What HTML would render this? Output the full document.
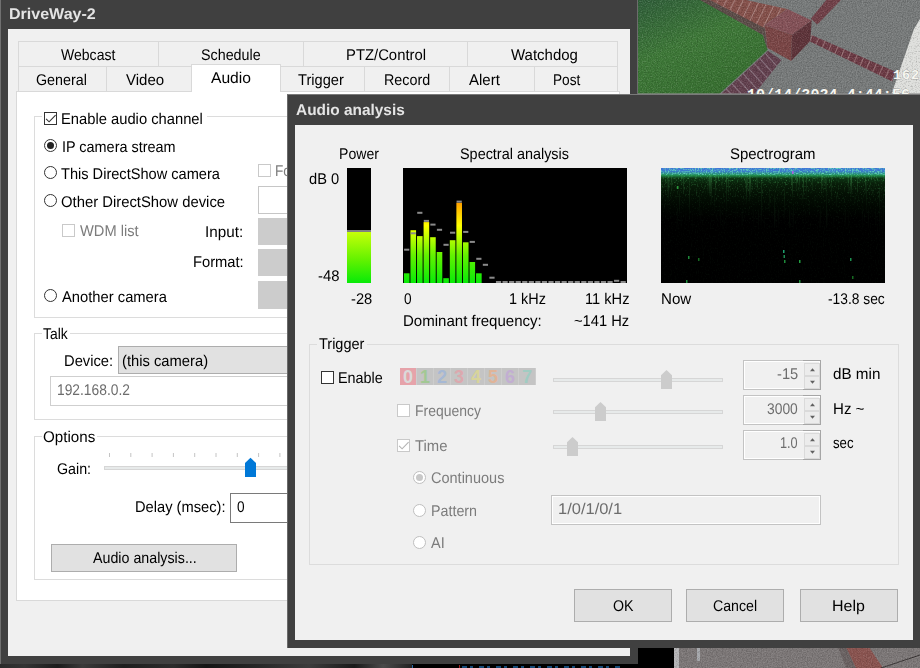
<!DOCTYPE html>
<html><head><meta charset="utf-8"><title>DriveWay-2 - Audio analysis</title>
<style>
html,body{margin:0;padding:0;background:#404040;}
#root{position:relative;width:920px;height:668px;overflow:hidden;background:#404040;font-family:"Liberation Sans",sans-serif;font-size:15.5px;color:#000;}
#root div,#root span,#root svg{position:absolute;box-sizing:border-box;}
.t{white-space:nowrap;line-height:21px;height:21px;transform-origin:0 0;text-rendering:geometricPrecision;}
.f0{background:#f0f0f0;}
.gb{border:1px solid #dcdcdc;}
.gap{background:#fff;height:1px;}
.tab{border-right:1px solid #d9d9d9;top:0;height:100%;}
.cb{width:13px;height:13px;border:1px solid #333;background:#fff;}
.cbd{width:13px;height:13px;border:1px solid #c9c9c9;background:#fff;}
.rd{width:13px;height:13px;border:1px solid #333;border-radius:50%;background:#fff;}
.rdd{width:13px;height:13px;border:1px solid #bfbfbf;border-radius:50%;background:#fff;}
.dis{background:#cccccc;}
.btn{background:#e1e1e1;border:1px solid #adadad;}
.spin{width:78px;height:30px;border:1px solid #c3c3c3;background:#f0f0f0;box-shadow:inset 1px 1px 0 #fff, inset -1px -1px 0 #fff;}
.spb{left:60px;width:16px;background:#ececec;border:1px solid #dadada;}
.trk{height:4px;background:#e7eaea;border:1px solid #d6d6d6;}
</style></head>
<body>
<div id="root">
<!-- camera view top-right -->
<svg style="left:638px;top:0;" width="282" height="94" viewBox="638 0 282 94">
  <defs>
    <linearGradient id="gr" x1="0" y1="0" x2="0.6" y2="1"><stop offset="0" stop-color="#305e3a"/><stop offset="0.5" stop-color="#3e7838"/><stop offset="1" stop-color="#376e30"/></linearGradient>
    <pattern id="bk1" width="7" height="7" patternUnits="userSpaceOnUse" patternTransform="rotate(24)"><rect width="7" height="7" fill="#6b3a44"/><rect width="1" height="7" fill="#9a7478"/></pattern>
    <pattern id="bk2" width="7.5" height="30" patternUnits="userSpaceOnUse" patternTransform="rotate(26)"><rect width="7.5" height="30" fill="#84504a"/><rect width="1" height="30" fill="#a8807c"/></pattern>
    <pattern id="bk3" width="7.5" height="30" patternUnits="userSpaceOnUse" patternTransform="rotate(-42)"><rect width="7.5" height="30" fill="#62404e"/><rect width="1" height="30" fill="#8a7480"/></pattern>
    <filter id="cn" x="0" y="0" width="100%" height="100%"><feTurbulence type="fractalNoise" baseFrequency="0.8" numOctaves="2" seed="2"/><feColorMatrix values="0 0 0 0 0  0 0 0 0 0  0 0 0 0 0  -1.6 0 0 0 0.8"/></filter>
    <filter id="cw" x="0" y="0" width="100%" height="100%"><feTurbulence type="fractalNoise" baseFrequency="0.8" numOctaves="2" seed="2"/><feColorMatrix values="0 0 0 0 1  0 0 0 0 1  0 0 0 0 1  1.6 0 0 0 -0.8"/></filter>
  </defs>
  <rect x="638" y="0" width="282" height="94" fill="#777a7a"/>
  <polygon points="638,0 702,0 763,35 767.6,50 719.2,94 638,94" fill="url(#gr)"/>
  <polygon points="700,0 709.8,0 764.6,27 767.6,50 763,35" fill="#5c4c48"/>
  <polygon points="709.8,0 746.3,0 787.4,9.1 764.6,25 764.6,28" fill="url(#bk2)"/>
  <polygon points="764.6,25 787.4,9.1 811.7,20.5 792,35" fill="#845258"/>
  <polygon points="764.6,25 792,35 791.2,61 767.6,48" fill="#7a4646"/>
  <polygon points="792,35 811.7,20.5 810.2,41 791.2,61" fill="#5e343a"/>
  <polygon points="811.6,35 895.5,71.7 892.3,81.5 810,41.6" fill="url(#bk1)"/>
  <polygon points="810.8,18.8 817.3,24.5 840.9,0 826.3,0" fill="#704048"/>
  <polygon points="768,51 781.5,60 754.5,94 721,94" fill="url(#bk3)"/>
  <polygon points="920,19 914,29 891.5,94 920,94" fill="#dedfdc"/>
  <rect x="638" y="0" width="282" height="94" filter="url(#cn)" opacity="0.32"/><rect x="638" y="0" width="282" height="94" filter="url(#cw)" opacity="0.26"/>
  <rect x="638" y="93" width="282" height="1" fill="#8d8d8d" opacity="0.6"/>
  <g font-family="'Liberation Mono',monospace" font-weight="bold" fill="#f6f6f0" stroke="#666" stroke-width="0.35" paint-order="stroke">
    <text x="893" y="78.5" font-size="13.5" textLength="26">162</text>
    <text x="747" y="98.5" font-size="15" textLength="163">10/14/2024 4:44:56</text>
  </g>
</svg>
<!-- camera views along the bottom -->
<div style="left:0;top:664px;width:412px;height:4px;background:linear-gradient(90deg,#2b2b2b 0,#343434 6%,#1c1c1c 14%,#3a3a3a 20%,#1e1e1e 30%,#2c2c2c 42%,#151515 50%,#262626 62%,#3c3c3c 75%,#1a1a1a 86%,#4a4a4a 93%,#222 100%);"></div>
<div style="left:412px;top:664px;width:226px;height:4px;background:#000;"></div>
<div style="left:412px;top:665px;width:1px;height:3px;background:#2a6aa8;"></div>
<div style="left:459px;top:665px;width:1px;height:3px;background:#a02020;"></div>
<div style="left:462px;top:666px;width:160px;height:2px;background:repeating-linear-gradient(90deg,#1e5e96 0 5px,#000 5px 8px,#1e5e96 8px 11px,#000 11px 17px);opacity:.8;"></div>
<div style="left:638px;top:647px;width:36px;height:21px;background:#000;"></div>
<svg style="left:674px;top:647px;" width="246" height="21" viewBox="674 647 246 21">
  <rect x="674" y="647" width="246" height="21" fill="#7c7777"/>
  <rect x="674" y="647" width="5" height="21" fill="#b4b4b6"/>
  <rect x="697" y="647" width="3" height="14" fill="#a6a8ac"/>
  <polygon points="838,647 846,647 856,668 846,668" fill="#6a6262"/>
  <polygon points="846,647 869,647 883,668 856,668" fill="#8a5450"/>
  <path d="M881 668 L920 655" stroke="#3c3838" stroke-width="1" fill="none"/>
  <rect x="674" y="647" width="246" height="21" filter="url(#cn)" opacity="0.3"/><rect x="674" y="647" width="246" height="21" filter="url(#cw)" opacity="0.24"/>
</svg>

<!-- ===== outer window ===== -->
<div style="left:0;top:0;width:638px;height:664px;background:#404040;"></div>
<div style="left:0;top:0;width:1px;height:664px;background:#707070;"></div>
<div style="left:637px;top:0;width:1px;height:94px;background:#6c6c6c;"></div>
<div class="f0" style="left:8px;top:29px;width:622px;height:627px;"></div>
<!-- tab pane -->
<div style="left:16px;top:91px;width:604px;height:510px;background:#fff;border:1px solid #d9d9d9;"></div>
<!-- tab row 1 -->
<div style="left:18px;top:41px;width:600px;height:26px;border-top:1px solid #d9d9d9;border-left:1px solid #d9d9d9;">
  <div class="tab" style="left:0;width:140px;"></div>
  <div class="tab" style="left:140px;width:145px;"></div>
  <div class="tab" style="left:285px;width:164px;"></div>
  <div class="tab" style="left:449px;width:150px;"></div>
</div>
<!-- tab row 2 -->
<div style="left:18px;top:66px;width:600px;height:25px;border-top:1px solid #d9d9d9;border-left:1px solid #d9d9d9;">
  <div class="tab" style="left:0;width:88px;"></div>
  <div class="tab" style="left:88px;width:85px;"></div>
  <div class="tab" style="left:262px;width:84px;"></div>
  <div class="tab" style="left:346px;width:85px;"></div>
  <div class="tab" style="left:431px;width:85px;"></div>
  <div class="tab" style="left:516px;width:83px;"></div>
</div>
<!-- selected tab -->
<div style="left:191px;top:64px;width:90px;height:28px;background:#fff;border:1px solid #d9d9d9;border-bottom:none;"></div>

<!-- group 1 -->
<div class="gb" style="left:34px;top:116px;width:570px;height:202px;"></div>
<div class="gap" style="left:42px;top:116px;width:165px;"></div>
<div class="cb" style="left:44px;top:112px;"></div>
<svg style="left:44px;top:112px;" width="13" height="13" viewBox="0 0 13 13"><path d="M2.1 6.9 L5.1 9.8 L11.6 3.2" fill="none" stroke="#333" stroke-width="1.15"/></svg>
<div class="rd" style="left:44px;top:139px;"></div>
<div style="left:47px;top:142px;width:7px;height:7px;border-radius:50%;background:#222;"></div>
<div class="rd" style="left:44px;top:166px;"></div>
<div class="rd" style="left:44px;top:194px;"></div>
<div class="rd" style="left:44px;top:289px;"></div>
<div class="cbd" style="left:258px;top:164px;"></div>
<div class="cbd" style="left:62px;top:224px;"></div>
<div style="left:258px;top:186px;width:200px;height:28px;background:#fff;border:1px solid #c6c6c6;"></div>
<div class="dis" style="left:258px;top:218px;width:200px;height:27px;"></div>
<div class="dis" style="left:258px;top:249px;width:200px;height:27px;"></div>
<div class="dis" style="left:258px;top:281px;width:200px;height:28px;"></div>

<!-- group 2: Talk -->
<div class="gb" style="left:34px;top:333px;width:570px;height:87px;"></div>
<div class="gap" style="left:42px;top:333px;width:28px;"></div>
<div class="btn" style="left:118px;top:346px;width:300px;height:28px;"></div>
<div style="left:50px;top:376px;width:400px;height:30px;background:#fff;border:1px solid #cfcfcf;"></div>

<!-- group 3: Options -->
<div class="gb" style="left:34px;top:436px;width:570px;height:144px;"></div>
<div class="gap" style="left:42px;top:436px;width:55px;"></div>
<svg style="left:100px;top:450px;" width="200" height="30" viewBox="0 0 200 30">
  <g stroke="#c4c4c4" stroke-width="1">
    <path d="M9.5 3v4M30.8 3v4M52.1 3v4M73.4 3v4M94.7 3v4M116 3v4M137.3 3v4M158.6 3v4M179.9 3v4"/>
  </g>
  <rect x="4.5" y="16.5" width="200" height="3" fill="#e7eaea" stroke="#d6d6d6"/>
  <path d="M145 13 L150.5 7.8 L156 13 L156 27 L145 27 Z" fill="#0078d7"/>
</svg>
<div style="left:230px;top:493px;width:200px;height:30px;background:#fff;border:1px solid #7a7a7a;"></div>
<div class="btn" style="left:51px;top:544px;width:186px;height:28px;"></div>
<span class="t" style="left:8.67px;top:4px;transform:scaleX(1.0347);color:#e4e4e4;font-weight:bold;">DriveWay-2</span>
<span class="t" style="left:61.20px;top:45px;transform:scaleX(0.9058);">Webcast</span>
<span class="t" style="left:201.26px;top:45px;transform:scaleX(0.9225);">Schedule</span>
<span class="t" style="left:346.00px;top:45px;transform:scaleX(0.9575);">PTZ/Control</span>
<span class="t" style="left:511.10px;top:45px;transform:scaleX(0.9670);">Watchdog</span>
<span class="t" style="left:36.26px;top:70px;transform:scaleX(0.9221);">General</span>
<span class="t" style="left:125.96px;top:70px;transform:scaleX(0.9701);">Video</span>
<span class="t" style="left:211.00px;top:68px;transform:scaleX(1.0077);">Audio</span>
<span class="t" style="left:297.96px;top:70px;transform:scaleX(0.9448);">Trigger</span>
<span class="t" style="left:383.75px;top:70px;transform:scaleX(0.9236);">Record</span>
<span class="t" style="left:469.10px;top:70px;transform:scaleX(0.9669);">Alert</span>
<span class="t" style="left:552.70px;top:70px;transform:scaleX(0.8807);">Post</span>
<span class="t" style="left:60.81px;top:109px;transform:scaleX(0.9513);">Enable audio channel</span>
<span class="t" style="left:61.60px;top:137px;transform:scaleX(0.9305);">IP camera stream</span>
<span class="t" style="left:61.26px;top:164px;transform:scaleX(0.9412);">This DirectShow camera</span>
<span class="t" style="left:61.18px;top:192px;transform:scaleX(0.9571);">Other DirectShow device</span>
<span class="t" style="left:80.20px;top:221px;transform:scaleX(0.9452);color:#7c7c7c;">WDM list</span>
<span class="t" style="left:205.22px;top:222px;transform:scaleX(0.9833);">Input:</span>
<span class="t" style="left:192.71px;top:252px;transform:scaleX(0.9498);">Format:</span>
<span class="t" style="left:61.60px;top:287px;transform:scaleX(0.9515);">Another camera</span>
<span class="t" style="left:274.55px;top:161px;transform:scaleX(0.8800);color:#7c7c7c;">Fo</span>
<span class="t" style="left:43.48px;top:324px;transform:scaleX(0.8954);">Talk</span>
<span class="t" style="left:64.01px;top:351px;transform:scaleX(0.9510);">Device:</span>
<span class="t" style="left:122.05px;top:351px;transform:scaleX(0.9514);">(this camera)</span>
<span class="t" style="left:57.39px;top:380px;transform:scaleX(0.8903);color:#6d6d6d;">192.168.0.2</span>
<span class="t" style="left:42.97px;top:427px;transform:scaleX(0.9780);">Options</span>
<span class="t" style="left:57.31px;top:459px;transform:scaleX(0.9200);">Gain:</span>
<span class="t" style="left:135.02px;top:497px;transform:scaleX(0.9462);">Delay (msec):</span>
<span class="t" style="left:236.51px;top:497px;transform:scaleX(0.8800);">0</span>
<span class="t" style="left:93.30px;top:548px;transform:scaleX(0.9193);">Audio analysis...</span>

<!-- ===== Audio analysis dialog ===== -->
<div style="left:287px;top:94px;width:640px;height:554px;background:#404040;border-top:1px solid #7a7a7a;border-left:1px solid #6a6a6a;"></div>
<div class="f0" style="left:295px;top:125px;width:618px;height:515px;"></div>
<div style="left:347px;top:168px;width:24px;height:115px;background:#000;"></div>
<div style="left:347px;top:232px;width:24px;height:51px;background:linear-gradient(to top,#08ea08 0%,#62f200 45%,#c6ff08 100%);"></div>
<div style="left:347px;top:230px;width:24px;height:2px;background:#808080;"></div>
<svg style="left:403px;top:168px;" width="224" height="115" viewBox="403 168 224 115"><defs><linearGradient id="sg" gradientUnits="userSpaceOnUse" x1="0" y1="283" x2="0" y2="168"><stop offset="0" stop-color="#08ea08"/><stop offset="0.24" stop-color="#62f200"/><stop offset="0.40" stop-color="#c0ff00"/><stop offset="0.50" stop-color="#ffff00"/><stop offset="0.62" stop-color="#ffc800"/><stop offset="0.72" stop-color="#ff9400"/><stop offset="1" stop-color="#ff0000"/></linearGradient></defs><rect x="403" y="168" width="224" height="115" fill="#000"/><rect x="403.90" y="273.3" width="5.6" height="9.7" fill="url(#sg)"/><rect x="410.46" y="230.2" width="5.6" height="52.8" fill="url(#sg)"/><rect x="417.02" y="236.1" width="5.6" height="46.9" fill="url(#sg)"/><rect x="423.58" y="222.1" width="5.6" height="60.9" fill="url(#sg)"/><rect x="430.14" y="237.2" width="5.6" height="45.8" fill="url(#sg)"/><rect x="436.70" y="252.0" width="5.6" height="31.0" fill="url(#sg)"/><rect x="443.26" y="278.2" width="5.6" height="4.8" fill="url(#sg)"/><rect x="449.82" y="240.2" width="5.6" height="42.8" fill="url(#sg)"/><rect x="456.38" y="202.7" width="5.6" height="80.3" fill="url(#sg)"/><rect x="462.94" y="242.3" width="5.6" height="40.7" fill="url(#sg)"/><rect x="469.50" y="262.0" width="5.6" height="21.0" fill="url(#sg)"/><rect x="476.06" y="273.3" width="5.6" height="9.7" fill="url(#sg)"/><rect x="404.10" y="248.7" width="5.2" height="2" fill="#8a8a8a"/><rect x="410.66" y="232.3" width="5.2" height="2" fill="#8a8a8a"/><rect x="417.22" y="211.8" width="5.2" height="2" fill="#8a8a8a"/><rect x="423.78" y="219.9" width="5.2" height="2" fill="#8a8a8a"/><rect x="430.34" y="223.6" width="5.2" height="2" fill="#8a8a8a"/><rect x="436.90" y="228.8" width="5.2" height="2" fill="#8a8a8a"/><rect x="443.46" y="243.8" width="5.2" height="2" fill="#8a8a8a"/><rect x="450.02" y="231.7" width="5.2" height="2" fill="#8a8a8a"/><rect x="456.58" y="200.6" width="5.2" height="2" fill="#8a8a8a"/><rect x="463.14" y="230.9" width="5.2" height="2" fill="#8a8a8a"/><rect x="469.70" y="240.9" width="5.2" height="2" fill="#8a8a8a"/><rect x="476.26" y="257.8" width="5.2" height="2" fill="#8a8a8a"/><rect x="482.82" y="263.8" width="5.2" height="2" fill="#8a8a8a"/><rect x="489.38" y="276.7" width="5.2" height="2" fill="#8a8a8a"/><rect x="495.94" y="281.0" width="5.2" height="2" fill="#8a8a8a"/><rect x="502.50" y="281.0" width="5.2" height="2" fill="#8a8a8a"/><rect x="509.06" y="281.0" width="5.2" height="2" fill="#8a8a8a"/><rect x="515.62" y="281.0" width="5.2" height="2" fill="#8a8a8a"/><rect x="522.18" y="281.0" width="5.2" height="2" fill="#8a8a8a"/><rect x="528.74" y="281.0" width="5.2" height="2" fill="#8a8a8a"/><rect x="535.30" y="281.0" width="5.2" height="2" fill="#8a8a8a"/><rect x="541.86" y="281.0" width="5.2" height="2" fill="#8a8a8a"/><rect x="548.42" y="281.0" width="5.2" height="2" fill="#8a8a8a"/><rect x="554.98" y="281.0" width="5.2" height="2" fill="#8a8a8a"/><rect x="561.54" y="281.0" width="5.2" height="2" fill="#8a8a8a"/><rect x="568.10" y="281.0" width="5.2" height="2" fill="#8a8a8a"/><rect x="574.66" y="281.0" width="5.2" height="2" fill="#8a8a8a"/><rect x="581.22" y="281.0" width="5.2" height="2" fill="#8a8a8a"/><rect x="587.78" y="281.0" width="5.2" height="2" fill="#8a8a8a"/><rect x="594.34" y="281.0" width="5.2" height="2" fill="#8a8a8a"/><rect x="600.90" y="281.0" width="5.2" height="2" fill="#8a8a8a"/><rect x="607.46" y="281.0" width="5.2" height="2" fill="#8a8a8a"/><rect x="614.02" y="279.8" width="5.2" height="2" fill="#8a8a8a"/><rect x="620.58" y="281.0" width="5.2" height="2" fill="#8a8a8a"/></svg>
<svg style="left:661px;top:168px;" width="224" height="115" viewBox="0 0 224 115"><defs><linearGradient id="sp" x1="0" y1="0" x2="0" y2="1"><stop offset="0" stop-color="#4274da"/><stop offset="0.028" stop-color="#3a7ccc"/><stop offset="0.05" stop-color="#2a9080"/><stop offset="0.065" stop-color="#1f8a4c"/><stop offset="0.09" stop-color="#0d3313"/><stop offset="0.14" stop-color="#081d09"/><stop offset="0.22" stop-color="#041004"/><stop offset="0.34" stop-color="#010601"/><stop offset="0.45" stop-color="#000"/><stop offset="1" stop-color="#000"/></linearGradient><linearGradient id="mkg" x1="0" y1="0" x2="0" y2="1"><stop offset="0.04" stop-color="#000"/><stop offset="0.07" stop-color="#8c8c8c"/><stop offset="0.16" stop-color="#484848"/><stop offset="0.3" stop-color="#1c1c1c"/><stop offset="0.5" stop-color="#0c0c0c"/><stop offset="1" stop-color="#0a0a0a"/></linearGradient><mask id="mk"><rect width="224" height="115" fill="url(#mkg)"/></mask><filter id="nz" x="0" y="0" width="100%" height="100%"><feTurbulence type="fractalNoise" baseFrequency="0.85 0.5" numOctaves="2" seed="5"/><feColorMatrix values="0 0 0 0 0.10  0 0 0 0 0.60  0 0 0 0 0.16  0 3.2 0 0 -1.7"/></filter><filter id="nz2" x="0" y="0" width="100%" height="100%"><feTurbulence type="fractalNoise" baseFrequency="0.6 0.03" numOctaves="1" seed="11"/><feColorMatrix values="0 0 0 0 0.08  0 0 0 0 0.45  0 0 0 0 0.12  0 4 0 0 -2.3"/></filter><filter id="nz3" x="0" y="0" width="100%" height="100%"><feTurbulence type="fractalNoise" baseFrequency="0.7 0.6" numOctaves="2" seed="9"/><feColorMatrix values="0 0 0 0 0.12  0 0 0 0 0.62  0 0 0 0 0.50  0 3.4 0 0 -1.5"/></filter></defs><rect width="224" height="115" fill="url(#sp)"/><rect width="224" height="6.5" filter="url(#nz3)"/><g mask="url(#mk)"><rect width="224" height="115" filter="url(#nz)"/><rect width="224" height="60" filter="url(#nz2)"/></g><rect x="27" y="88" width="1.5" height="3" fill="#1e8a3a"/><rect x="37" y="90" width="1.5" height="3" fill="#156a20"/><rect x="122" y="82" width="1.5" height="3" fill="#1fa070"/><rect x="122.5" y="87" width="1.5" height="3" fill="#1c8a50"/><rect x="123" y="92" width="1.5" height="3" fill="#1e8a3a"/><rect x="138" y="92" width="1.5" height="3" fill="#22a040"/><rect x="189" y="90" width="1.5" height="3" fill="#1e9050"/><rect x="16" y="18" width="1.5" height="3" fill="#2a9a3a"/><rect x="131" y="3" width="1.5" height="3" fill="#b060e0"/><rect x="25" y="112" width="1.5" height="3" fill="#1e8a3a"/><rect x="138" y="112" width="1.5" height="3" fill="#1e8a3a"/><rect x="191" y="108" width="1.5" height="3" fill="#156a20"/></svg>
<div class="gb" style="left:309px;top:344px;width:590px;height:221px;"></div>
<div class="gap" style="left:317px;top:344px;width:50px;background:#f0f0f0;"></div>
<div class="cb" style="left:321px;top:371px;"></div>
<div style="left:400px;top:368px;width:17px;height:17px;background:#e6a3aa;border-right:1px solid #cdcdcd;"><span style="left:0;top:1px;width:16px;height:17px;line-height:17px;text-align:center;font-weight:bold;font-size:18px;color:#dadada;">0</span></div>
<div style="left:417px;top:368px;width:17px;height:17px;background:#c4c4c4;border-right:1px solid #cdcdcd;"><span style="left:0;top:1px;width:16px;height:17px;line-height:17px;text-align:center;font-weight:bold;font-size:18px;color:#a2c894;">1</span></div>
<div style="left:434px;top:368px;width:17px;height:17px;background:#c4c4c4;border-right:1px solid #cdcdcd;"><span style="left:0;top:1px;width:16px;height:17px;line-height:17px;text-align:center;font-weight:bold;font-size:18px;color:#a6b8d4;">2</span></div>
<div style="left:451px;top:368px;width:17px;height:17px;background:#c4c4c4;border-right:1px solid #cdcdcd;"><span style="left:0;top:1px;width:16px;height:17px;line-height:17px;text-align:center;font-weight:bold;font-size:18px;color:#dca8ae;">3</span></div>
<div style="left:468px;top:368px;width:17px;height:17px;background:#c4c4c4;border-right:1px solid #cdcdcd;"><span style="left:0;top:1px;width:16px;height:17px;line-height:17px;text-align:center;font-weight:bold;font-size:18px;color:#d8d49a;">4</span></div>
<div style="left:485px;top:368px;width:17px;height:17px;background:#c4c4c4;border-right:1px solid #cdcdcd;"><span style="left:0;top:1px;width:16px;height:17px;line-height:17px;text-align:center;font-weight:bold;font-size:18px;color:#e0b498;">5</span></div>
<div style="left:502px;top:368px;width:17px;height:17px;background:#c4c4c4;border-right:1px solid #cdcdcd;"><span style="left:0;top:1px;width:16px;height:17px;line-height:17px;text-align:center;font-weight:bold;font-size:18px;color:#c2aed2;">6</span></div>
<div style="left:519px;top:368px;width:17px;height:17px;background:#c4c4c4;border-right:1px solid #cdcdcd;"><span style="left:0;top:1px;width:16px;height:17px;line-height:17px;text-align:center;font-weight:bold;font-size:18px;color:#a0ccc2;">7</span></div>
<div class="cbd" style="left:397px;top:404px;"></div>
<div class="cbd" style="left:397px;top:439px;"></div>
<svg style="left:397px;top:439px;" width="13" height="13" viewBox="0 0 13 13"><path d="M2.1 6.9 L5.1 9.8 L11.6 3.2" fill="none" stroke="#b4b4b4" stroke-width="1.15"/></svg>
<div class="rdd" style="left:413px;top:471px;"></div>
<div class="rdd" style="left:413px;top:504px;"></div>
<div class="rdd" style="left:413px;top:536px;"></div>
<div style="left:416px;top:474px;width:7px;height:7px;border-radius:50%;background:#c8c8c8;"></div>
<div class="trk" style="left:553px;top:377.5px;width:170px;"></div>
<svg style="left:661px;top:370.0px;" width="11" height="19" viewBox="0 0 11 19"><path d="M0 5.2 L5.5 0 L11 5.2 L11 19 L0 19 Z" fill="#cccccc"/></svg>
<div class="trk" style="left:553px;top:409.5px;width:170px;"></div>
<svg style="left:595px;top:402.0px;" width="11" height="19" viewBox="0 0 11 19"><path d="M0 5.2 L5.5 0 L11 5.2 L11 19 L0 19 Z" fill="#cccccc"/></svg>
<div class="trk" style="left:553px;top:444.5px;width:170px;"></div>
<svg style="left:567px;top:437.0px;" width="11" height="19" viewBox="0 0 11 19"><path d="M0 5.2 L5.5 0 L11 5.2 L11 19 L0 19 Z" fill="#cccccc"/></svg>
<div class="spin" style="left:743px;top:360px;"><div style="left:59px;top:-1px;width:18px;height:30px;border:1px solid #a6a6a6;border-left:none;"></div><div class="spb" style="top:2px;height:13px;"></div><div class="spb" style="top:15px;height:13px;"></div><svg style="left:61px;top:2px;" width="15" height="26" viewBox="0 0 15 26"><path d="M5 8.2 L7.5 5.2 L10 8.2 Z M5 17.8 L7.5 20.8 L10 17.8 Z" fill="#606060"/></svg></div>
<div class="spin" style="left:743px;top:395px;"><div style="left:59px;top:-1px;width:18px;height:30px;border:1px solid #a6a6a6;border-left:none;"></div><div class="spb" style="top:2px;height:13px;"></div><div class="spb" style="top:15px;height:13px;"></div><svg style="left:61px;top:2px;" width="15" height="26" viewBox="0 0 15 26"><path d="M5 8.2 L7.5 5.2 L10 8.2 Z M5 17.8 L7.5 20.8 L10 17.8 Z" fill="#606060"/></svg></div>
<div class="spin" style="left:743px;top:430px;"><div style="left:59px;top:-1px;width:18px;height:30px;border:1px solid #a6a6a6;border-left:none;"></div><div class="spb" style="top:2px;height:13px;"></div><div class="spb" style="top:15px;height:13px;"></div><svg style="left:61px;top:2px;" width="15" height="26" viewBox="0 0 15 26"><path d="M5 8.2 L7.5 5.2 L10 8.2 Z M5 17.8 L7.5 20.8 L10 17.8 Z" fill="#606060"/></svg></div>
<div style="left:551px;top:495px;width:270px;height:30px;border:1px solid #c3c3c3;background:#f0f0f0;box-shadow:inset 1px 1px 0 #fff, inset -1px -1px 0 #fff;"></div>
<div class="btn" style="left:574px;top:589px;width:98px;height:33px;"></div>
<div class="btn" style="left:686px;top:589px;width:98px;height:33px;"></div>
<div class="btn" style="left:800px;top:589px;width:98px;height:33px;"></div>
<span class="t" style="left:295.70px;top:100px;transform:scaleX(0.9940);color:#e4e4e4;font-weight:bold;">Audio analysis</span>
<span class="t" style="left:339.06px;top:144px;transform:scaleX(0.9082);">Power</span>
<span class="t" style="left:460.00px;top:144px;transform:scaleX(0.9302);">Spectral analysis</span>
<span class="t" style="left:730.38px;top:144px;transform:scaleX(0.9644);">Spectrogram</span>
<span class="t" style="left:308.99px;top:169px;transform:scaleX(0.9459);">dB 0</span>
<span class="t" style="left:317.88px;top:266px;transform:scaleX(0.9571);">-48</span>
<span class="t" style="left:350.99px;top:289px;transform:scaleX(0.9476);">-28</span>
<span class="t" style="left:403.51px;top:289px;transform:scaleX(0.8800);">0</span>
<span class="t" style="left:508.53px;top:289px;transform:scaleX(0.9333);">1 kHz</span>
<span class="t" style="left:584.82px;top:289px;transform:scaleX(0.9444);">11 kHz</span>
<span class="t" style="left:661.18px;top:289px;transform:scaleX(0.9748);">Now</span>
<span class="t" style="left:828.03px;top:289px;transform:scaleX(0.8896);">-13.8 sec</span>
<span class="t" style="left:403.49px;top:311px;transform:scaleX(0.9704);">Dominant frequency:</span>
<span class="t" style="left:573.99px;top:311px;transform:scaleX(0.9480);">~141 Hz</span>
<span class="t" style="left:319.47px;top:334px;transform:scaleX(0.9354);">Trigger</span>
<span class="t" style="left:338.34px;top:368px;transform:scaleX(0.9276);">Enable</span>
<span class="t" style="left:414.57px;top:401px;transform:scaleX(0.9000);color:#7c7c7c;">Frequency</span>
<span class="t" style="left:414.76px;top:436px;transform:scaleX(0.9576);color:#7c7c7c;">Time</span>
<span class="t" style="left:431.00px;top:468px;transform:scaleX(0.9359);color:#7c7c7c;">Continuous</span>
<span class="t" style="left:430.55px;top:501px;transform:scaleX(0.9215);color:#7c7c7c;">Pattern</span>
<span class="t" style="left:430.80px;top:533px;transform:scaleX(0.9358);color:#7c7c7c;">AI</span>
<span class="t" style="left:776.59px;top:364px;transform:scaleX(0.9476);color:#6d6d6d;">-15</span>
<span class="t" style="left:766.85px;top:399px;transform:scaleX(0.8925);color:#6d6d6d;">3000</span>
<span class="t" style="left:779.97px;top:433px;transform:scaleX(0.8203);color:#6d6d6d;">1.0</span>
<span class="t" style="left:833.06px;top:364px;transform:scaleX(0.9828);">dB min</span>
<span class="t" style="left:832.59px;top:399px;transform:scaleX(0.9719);">Hz ~</span>
<span class="t" style="left:833.37px;top:433px;transform:scaleX(0.8516);">sec</span>
<span class="t" style="left:558.27px;top:499px;transform:scaleX(1.0627);color:#6d6d6d;">1/0/1/0/1</span>
<span class="t" style="left:612.81px;top:596px;transform:scaleX(0.9163);">OK</span>
<span class="t" style="left:713.01px;top:596px;transform:scaleX(0.9140);">Cancel</span>
<span class="t" style="left:832.41px;top:596px;transform:scaleX(1.0300);">Help</span>
</div>
</body></html>
